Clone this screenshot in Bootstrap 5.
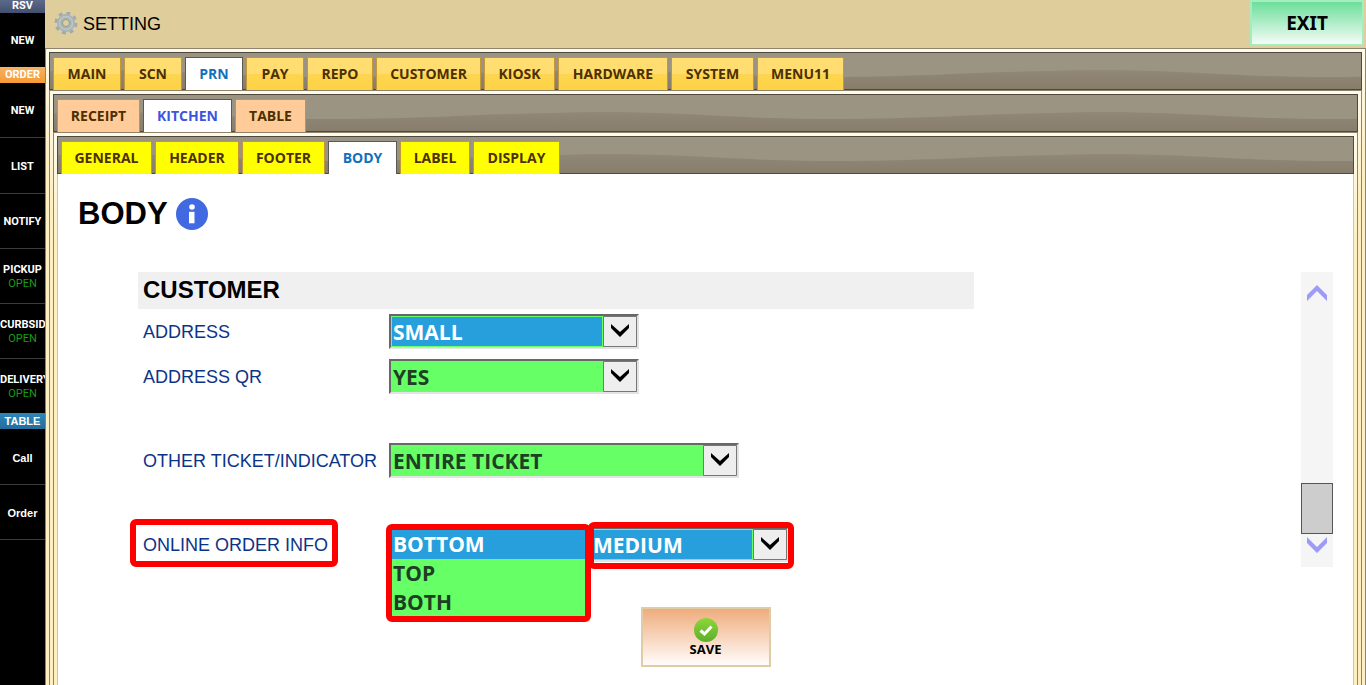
<!DOCTYPE html>
<html lang="en">
<head>
<meta charset="utf-8">
<meta name="viewport" content="width=device-width, initial-scale=1">
<title>Setting</title>
<link href="https://cdn.jsdelivr.net/npm/bootstrap@5.3.0/dist/css/bootstrap.min.css" rel="stylesheet">
<style>
  body { font-family: "Liberation Sans", Arial, sans-serif; color: #000; background: #fff; }

  /* left rail */
  .rail { flex: 0 0 45px; background: #000; font: bold 11px/14px Roboto, sans-serif; }
  .rail a { color: #fff; height: 55px; padding-top: 2px; border-bottom: 1px solid #3c3c3c; white-space: nowrap; }
  .rail a.rail-last { height: 54px; border-bottom: 0; }
  .rail a.rail-tall { height: 56px; }
  .rail .rail-arial, .rail-table { font-family: "Liberation Sans", Arial, sans-serif; }
  .rail small { font-size: 11px; font-weight: 400; color: #1a9c1a; }
  .rail-head { height: 16px; color: #fff; text-align: center; line-height: 16px; flex: none; }
  .rail-rsv { height: 13px; line-height: 11px; background: linear-gradient(#5d6988, #434f70); }
  .rail-order { background: linear-gradient(#f9b25f, #f59a35); }
  .rail-table { background: linear-gradient(#2f86b8, #226d9c); }

  /* title bar */
  .titlebar { height: 48px; flex: none; background: #dfce9c; padding-left: 8px; padding-right: 2px; font-size: 18px; line-height: 22px; }
  .exit-btn { width: 114px; height: 46px; border: 2px solid #a3edbf; border-radius: 0; background: linear-gradient(#6cdf9a, #f4fcf7); font: bold 19px/24px "Noto Sans", sans-serif; color: #000; }

  /* nested tab panels */
  .pane { border: 1px solid #8e846b; border-bottom: 0; padding: 3px 3px 0; background: linear-gradient(#fffaeb, #fdefc2 110px); }
  .strip { height: 38px; flex: none; border: 1px solid #4f483c; padding: 4px 3px 0; gap: 3px;
    background: #9c9483 url("data:image/svg+xml,%3Csvg xmlns='http://www.w3.org/2000/svg' width='500' height='36'%3E%3Cdefs%3E%3ClinearGradient id='g' x2='0' y2='1'%3E%3Cstop stop-color='%23918876'/%3E%3Cstop offset='1' stop-color='%23867d6c'/%3E%3C/linearGradient%3E%3C/defs%3E%3Cpath fill='url(%23g)' d='M0 18Q23 17 47 17C130 17 190 24 277 24C370 24 420 19 500 18V36H0z'/%3E%3C/svg%3E") 0 0 repeat-x; }
  .strip a { height: 33px; border: 1px solid #c2983a; border-bottom: 0; color: #4c3000; font: bold 14px/32px "Open Sans", sans-serif; text-align: center; text-decoration: none; white-space: nowrap; }
  .strip-gold { grid-template-columns: 68px 58px 58px 58px 66px 105px 71px 110px 83px 87px; }
  .strip-peach { grid-template-columns: 83px 89px 71px; }
  .strip-yellow { grid-template-columns: 91px 84px 83px 69px 70px 87px; }
  .strip-gold a { background: linear-gradient(#ffdd70 0 50%, #fed551 50%, #fdd243); }
  .strip-peach a { background: #fc9; }
  .strip-yellow a { background: #ff0; }
  .strip a.active { background: #fff; border-color: #5a5a50; color: #0f72bd; }
  .strip-peach a.active { color: #3d54e0; }
  .sheet { background: #fff; border: 1px solid #c8c4b8; border-top: 0; border-bottom: 0; }

  /* sheet content */
  .sheet-head { padding: 22px 20px 40px; }
  .sheet-title { font-size: 31px; line-height: 36px; font-weight: 700; }
  .form-side { flex: 0 1 836px; }
  .form-zone { height: 295px; padding: 0 20px 0 80px; }
  .group-head { height: 37px; background: #f0f0f0; padding-left: 5px; font-size: 24px; line-height: 36px; font-weight: 700; }
  .line { height: 45px; padding-left: 5px; }
  .line-gap { margin-top: 39px; }
  .line-label { width: 246px; flex: none; font-size: 18px; line-height: 22px; color: #0b3487; white-space: nowrap; }
  .combo { height: 35px; border: 2px solid; border-color: #686868 #e3e3e3 #e3e3e3 #686868; border-radius: 0; padding: 2px 36px 0 2px; appearance: none;
    font: bold 21px/29px "Open Sans", sans-serif; color: #1f3f25;
    background: url("data:image/svg+xml,%3Csvg xmlns='http://www.w3.org/2000/svg' width='34' height='31'%3E%3Cpath fill='%23eee' stroke='%23777' d='M.5.5h33v30H.5z'/%3E%3Cpath fill='%23000' d='M8 8l9 8 9-8v4l-9 9-9-9z'/%3E%3C/svg%3E") right top no-repeat, #6f6; }
  .combo-picked { color: #fff;
    background: url("data:image/svg+xml,%3Csvg xmlns='http://www.w3.org/2000/svg' width='34' height='31'%3E%3Cpath fill='%23eee' stroke='%23777' d='M.5.5h33v30H.5z'/%3E%3Cpath fill='%23000' d='M8 8l9 8 9-8v4l-9 9-9-9z'/%3E%3C/svg%3E") right top no-repeat, linear-gradient(#269fdc, #269fdc) 1px 1px / calc(100% - 36px) calc(100% - 2px) no-repeat, #6f6; }
  .combo-m { width: 250px; } .combo-l { width: 350px; } .combo-s { width: 200px; }
  .list-slot { width: 200px; height: 35px; }
  .open-list { position: absolute; z-index: 2; left: -3px; top: -3px; width: 205px; height: 98px; overflow: hidden; border: 6px solid #f00; border-radius: 6px; padding: 0; background: #6f6; font: bold 21px/29px "Open Sans", sans-serif; appearance: none; outline: 0; }
  .open-list option { height: 29px; min-height: 29px; padding: 0 1px; font-weight: 700; line-height: 29px; color: #1f3f25; }
  .open-list option:checked { background: linear-gradient(#269fdc, #269fdc); -webkit-text-fill-color: #fff; }
  .ring::after { content: ""; position: absolute; z-index: 3; inset: -5px -5px -7px -1px; border: 6px solid #f00; border-radius: 6px; pointer-events: none; }
  .ring-label::after { inset: -15px 51px -11px -13px; }
  .scroller { width: 32px; background: #f5f5f5; }
  .scroller button { height: 42px; }
  .scroller .to-end { height: 33px; padding-bottom: 11px; }
  .thumb { height: 51px; background: #cdcdcd; border: 1px solid #555; }
  .save-btn { width: 130px; height: 60px; margin-top: 40px; border: 2px solid #dfcba6; border-radius: 0; padding: 9px 0 0; background: linear-gradient(#efac7c, #fffdfb); font: bold 13px/14px "Open Sans", sans-serif; color: #000; }
</style>
</head>
<body>
<div class="d-flex vh-100 overflow-hidden">
  <nav class="rail d-flex flex-column overflow-hidden">
    <div class="rail-head rail-rsv">RSV</div>
    <a href="#" class="rail-last d-flex align-items-center justify-content-center text-decoration-none flex-shrink-0">NEW</a>
    <div class="rail-head rail-order">ORDER</div>
    <a href="#" class="d-flex align-items-center justify-content-center text-decoration-none flex-shrink-0">NEW</a>
    <a href="#" class="rail-tall d-flex align-items-center justify-content-center text-decoration-none flex-shrink-0">LIST</a>
    <a href="#" class="d-flex align-items-center justify-content-center text-decoration-none flex-shrink-0">NOTIFY</a>
    <a href="#" class="d-flex flex-column align-items-center justify-content-center text-decoration-none flex-shrink-0">PICKUP<small>OPEN</small></a>
    <a href="#" class="d-flex flex-column justify-content-center text-decoration-none flex-shrink-0">CURBSIDE<small class="text-center">OPEN</small></a>
    <a href="#" class="rail-last d-flex flex-column justify-content-center text-decoration-none flex-shrink-0">DELIVERY<small class="text-center">OPEN</small></a>
    <div class="rail-head rail-table">TABLE</div>
    <a href="#" class="rail-tall rail-arial d-flex align-items-center justify-content-center text-decoration-none flex-shrink-0">Call</a>
    <a href="#" class="rail-arial d-flex align-items-center justify-content-center text-decoration-none flex-shrink-0">Order</a>
  </nav>

  <main class="flex-fill d-flex flex-column">
    <header class="titlebar d-flex align-items-start">
      <div class="d-flex align-items-center gap-1 pt-2 mt-1 lh-1">
        <svg width="26" height="24" viewBox="0 0 26 24" aria-hidden="true">
          <g fill="none" stroke="#9fabae">
            <circle cx="13" cy="11" r="10" stroke-width="3" stroke-dasharray="3.930 3.930"/>
            <circle cx="13" cy="11" r="6.500" stroke="#a5b2b6" stroke-width="5"/>
            <circle cx="13" cy="11" r="6.500" stroke="#bcc6c7" stroke-width="1.500"/>
            <circle cx="13" cy="11" r="3.500" stroke="#84959c"/>
          </g>
          <circle cx="13" cy="11" r="2.500" fill="#dfce9c"/>
        </svg>
        <span>SETTING</span>
      </div>
      <button type="button" class="btn exit-btn ms-auto p-0">EXIT</button>
    </header>

    <div class="pane flex-fill d-flex flex-column">
      <nav class="strip strip-gold d-grid">
        <a href="#">MAIN</a><a href="#">SCN</a><a href="#" class="active">PRN</a><a href="#">PAY</a><a href="#">REPO</a><a href="#">CUSTOMER</a><a href="#">KIOSK</a><a href="#">HARDWARE</a><a href="#">SYSTEM</a><a href="#">MENU11</a>
      </nav>
      <div class="pane flex-fill d-flex flex-column">
        <nav class="strip strip-peach d-grid">
          <a href="#">RECEIPT</a><a href="#" class="active">KITCHEN</a><a href="#">TABLE</a>
        </nav>
        <div class="pane flex-fill d-flex flex-column">
          <nav class="strip strip-yellow d-grid">
            <a href="#">GENERAL</a><a href="#">HEADER</a><a href="#">FOOTER</a><a href="#" class="active">BODY</a><a href="#">LABEL</a><a href="#">DISPLAY</a>
          </nav>

          <div class="sheet flex-fill">
            <div class="sheet-head d-flex align-items-center gap-2">
              <h1 class="sheet-title m-0">BODY</h1>
              <button type="button" class="btn p-0 border-0 d-flex" aria-label="Information">
                <svg width="32" height="32" viewBox="0 0 32 32"><circle cx="16" cy="16" r="16" fill="#4169e1"/><circle cx="16" cy="9" r="2.800" fill="#fff"/><path fill="#fff" d="M13 13.800h5.500v11.500H13z"/></svg>
              </button>
            </div>

            <div class="form-zone d-flex justify-content-between">
              <form class="form-side" id="bodyForm">
                <h2 class="group-head m-0">CUSTOMER</h2>
                <div class="line d-flex align-items-center">
                  <label class="line-label" for="address">ADDRESS</label>
                  <select id="address" class="combo combo-picked combo-m"><option>SMALL</option></select>
                </div>
                <div class="line d-flex align-items-center">
                  <label class="line-label" for="addressQr">ADDRESS QR</label>
                  <select id="addressQr" class="combo combo-m"><option>YES</option></select>
                </div>
                <div class="line line-gap d-flex align-items-center">
                  <label class="line-label" for="ticket">OTHER TICKET/INDICATOR</label>
                  <select id="ticket" class="combo combo-l"><option>ENTIRE TICKET</option></select>
                </div>
                <div class="line line-gap d-flex align-items-center">
                  <label class="line-label ring ring-label position-relative" for="onlinePlace">ONLINE ORDER INFO</label>
                  <div class="list-slot position-relative">
                    <select id="onlinePlace" class="open-list" size="3"><option selected>BOTTOM</option><option>TOP</option><option>BOTH</option></select>
                  </div>
                  <div class="ring position-relative d-flex">
                    <select class="combo combo-picked combo-s" aria-label="Online order info size"><option>MEDIUM</option></select>
                  </div>
                </div>
              </form>
              <div class="scroller d-flex flex-column">
                <button type="button" class="btn p-0 border-0 d-flex align-items-center justify-content-center" aria-label="Scroll up">
                  <svg width="20" height="16" viewBox="0 0 20 16"><path fill="#9c9cf8" d="M10 0l10 10v6L10 6 0 16v-6z"/></svg>
                </button>
                <div class="flex-fill"></div>
                <div class="thumb"></div>
                <button type="button" class="to-end btn px-0 pt-0 border-0 d-flex align-items-center justify-content-center" aria-label="Scroll down">
                  <svg width="20" height="16" viewBox="0 0 20 16"><path fill="#9c9cf8" d="M10 16L0 6V0l10 10L20 0v6z"/></svg>
                </button>
              </div>
            </div>

            <button type="submit" form="bodyForm" class="btn save-btn d-flex flex-column align-items-center mx-auto">
              <svg width="24" height="24" viewBox="0 0 24 24" class="flex-shrink-0" aria-hidden="true"><defs><linearGradient id="ok" x2="0" y2="1"><stop stop-color="#8ed63a"/><stop offset="1" stop-color="#5cae2c"/></linearGradient></defs><circle cx="12" cy="12" r="12" fill="url(#ok)"/><path d="M6.500 12.500l4 3.500 7-7.500" fill="none" stroke="#fff" stroke-width="3"/></svg>
              <span>SAVE</span>
            </button>
          </div>
        </div>
      </div>
    </div>
  </main>
</div>
<script src="https://cdn.jsdelivr.net/npm/bootstrap@5.3.0/dist/js/bootstrap.bundle.min.js"></script>
</body>
</html>
